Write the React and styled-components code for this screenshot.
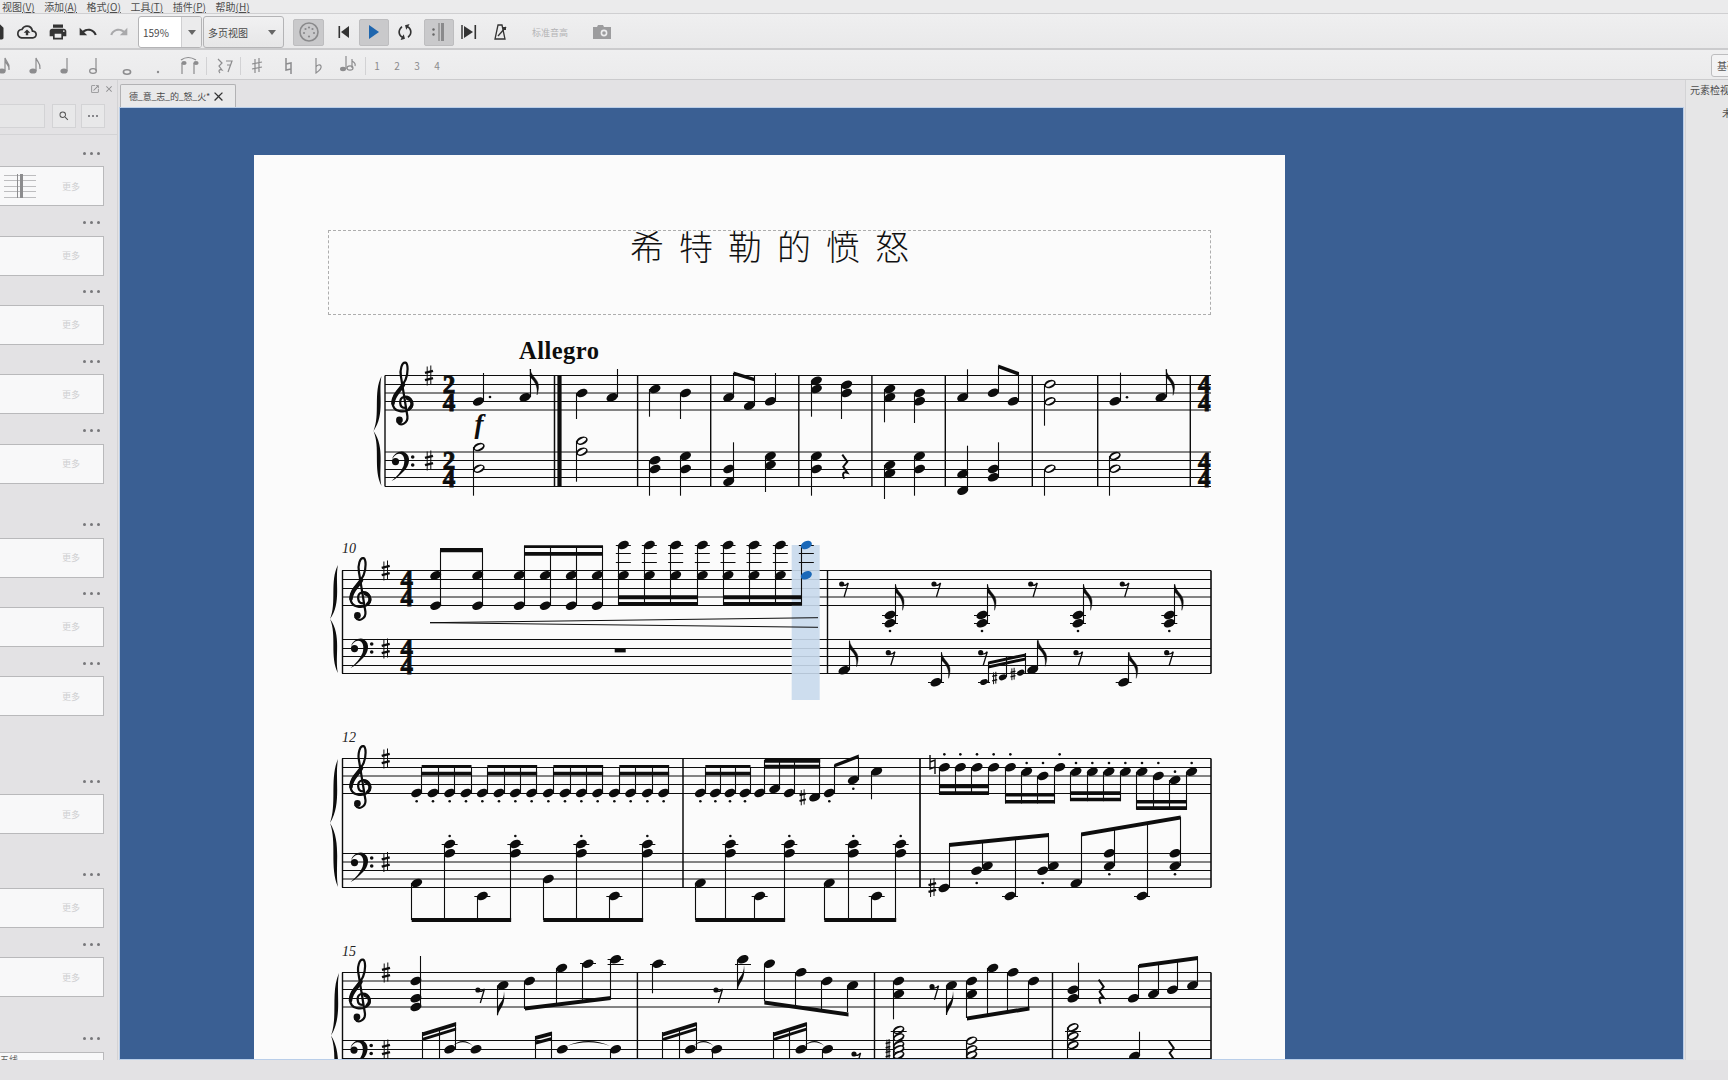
import React from "react";
import styled, { createGlobalStyle } from "styled-components";
import {
  MdPrint,
  MdUndo,
  MdRedo,
  MdOutlineCloudUpload,
  MdSync,
  MdSave,
  MdSearch,
  MdClose,
  MdOutlineOpenInNew,
} from "react-icons/md";

const CJK = `"Noto Sans CJK SC", "Noto Sans", sans-serif`;
const SERIF = `"Liberation Serif", serif`;
const INK = "#0d0d0d";
const PAPER = "#fbfbfb";
const GREY = "#8c8c8e";

const GlobalStyle = createGlobalStyle`
  html, body {
    margin: 0;
    padding: 0;
    background: #e3e2e4;
    overflow: hidden;
  }
  * { box-sizing: border-box; }
`;

const Shell = styled.div`
  width: 1728px;
  height: 1080px;
  display: flex;
  flex-direction: column;
  overflow: hidden;
  background: #e3e2e4;
  font-family: ${CJK};
`;

const MenuBar = styled.div`
  height: 14px;
  flex: none;
  display: flex;
  align-items: center;
  gap: 9.6px;
  padding-left: 2px;
  background: #ebebec;
  border-bottom: 1px solid #cfcfd1;
`;
const MenuItem = styled.span`
  font-size: 10px;
  line-height: 13px;
  color: #4d4d4d;
  white-space: nowrap;
`;

const ToolBar = styled.div`
  height: 36px;
  flex: none;
  display: flex;
  align-items: center;
  padding-top: 2px;
  margin-left: -20px;
  width: 1748px;
  background: linear-gradient(#efeff0, #e9e9ea);
  border-bottom: 2px solid #cbcbcd;
`;
const IconBtn = styled.div`
  flex: none;
  width: ${(p) => p.$w || 30}px;
  height: 27px;
  margin-left: ${(p) => p.$ml || 0}px;
  display: flex;
  align-items: center;
  justify-content: center;
  color: ${(p) => p.$color || "#333"};
  font-size: 20px;
  border-radius: 2px;
  background: ${(p) => (p.$on ? "#c9c9cb" : "transparent")};
  border: 1px solid ${(p) => (p.$on ? "#bdbdbf" : "transparent")};
  & > svg.turned {
    transform: rotate(30deg);
  }
`;
const ComboBox = styled.div`
  flex: none;
  width: ${(p) => p.$w}px;
  height: 32px;
  margin-left: ${(p) => p.$ml}px;
  display: flex;
  align-items: center;
  border: 1px solid #b4b4b6;
  border-radius: 3px;
  background: ${(p) => (p.$edit ? "#fff" : "linear-gradient(#f1f1f2, #e6e6e7)")};
  overflow: hidden;
`;
const ComboText = styled.span`
  flex: 1;
  padding-left: 4px;
  font-size: 10px;
  color: #4a4a4a;
  white-space: nowrap;
`;
const ComboArrow = styled.span`
  flex: none;
  width: ${(p) => p.$w}px;
  height: 100%;
  display: flex;
  align-items: center;
  justify-content: center;
  background: ${(p) => (p.$edit ? "#ebebec" : "transparent")};
  border-left: ${(p) => (p.$edit ? "1px solid #cfcfd1" : "none")};
  &::after {
    content: "";
    border-left: 4px solid transparent;
    border-right: 4px solid transparent;
    border-top: 5px solid #666;
  }
`;
const Handle = styled.span`
  flex: none;
  width: 4px;
  height: 22px;
  margin-left: ${(p) => p.$ml}px;
  background-image: radial-gradient(#c2c2c4 35%, transparent 40%);
  background-size: 2px 2px;
`;
const ConcertPitch = styled.span`
  flex: none;
  width: 38px;
  margin-left: ${(p) => p.$ml}px;
  font-size: 9px;
  color: #b3b3b5;
  white-space: nowrap;
`;

const NoteBar = styled.div`
  height: 30px;
  flex: none;
  display: flex;
  align-items: center;
  padding-top: 2px;
  margin-left: -9px;
  width: 1737px;
  background: linear-gradient(#efeff0, #ebebec);
  border-bottom: 1px solid #cbcbcd;
  overflow: hidden;
`;
const NoteBtn = styled.div`
  flex: none;
  width: ${(p) => p.$w}px;
  height: 26px;
  display: flex;
  align-items: center;
  justify-content: center;
  font-size: 10px;
  color: #8a8a8c;
`;
const ThinRule = styled.span`
  flex: none;
  width: 1px;
  height: 18px;
  margin: 0 1px;
  background: #d2d2d4;
`;
const PresetBtn = styled.div`
  flex: none;
  width: 32px;
  height: 23px;
  margin-left: auto;
  margin-right: -15px;
  padding-left: 5px;
  font-size: 10px;
  line-height: 21px;
  color: #555;
  border: 1px solid #bdbdbf;
  border-radius: 3px;
  background: #f3f3f4;
  white-space: nowrap;
`;

const Main = styled.div`
  flex: 1;
  min-height: 0;
  display: flex;
`;

const LeftDock = styled.aside`
  flex: none;
  width: 118px;
  height: 100%;
  overflow: hidden;
  background: #e3e2e4;
  border-right: 1px solid #d3d3d5;
`;
const DockHead = styled.div`
  height: 24px;
  display: flex;
  justify-content: flex-end;
  align-items: center;
  gap: 4px;
  padding: 0 3px 6px 0;
  color: #8a8a8c;
  font-size: 10px;
`;
const SearchRow = styled.div`
  height: 31px;
  display: flex;
  align-items: flex-start;
  border-bottom: 1px solid #d3d3d5;
`;
const SearchInput = styled.div`
  width: 45px;
  height: 24px;
  border: 1px solid #d3d3d5;
  border-left: none;
  background: #e6e6e7;
`;
const SquareBtn = styled.div`
  width: 24px;
  height: 24px;
  margin-left: ${(p) => p.$ml}px;
  display: flex;
  align-items: center;
  justify-content: center;
  font-size: 12px;
  color: #555;
  border: 1px solid #d3d3d5;
  background: #e8e8e9;
`;
const EllipsisDots = styled.span`
  display: flex;
  gap: 2px;
  & > i {
    width: 2px;
    height: 2px;
    border-radius: 50%;
    background: #66666a;
  }
`;
const PaletteList = styled.div`
  padding-top: 12px;
`;
const PaletteSection = styled.section`
  height: ${(p) => p.$h}px;
`;
const Dots = styled.div`
  height: 12px;
  display: flex;
  align-items: center;
  justify-content: flex-end;
  gap: 4px;
  padding-right: 17px;
  & > i {
    width: 3px;
    height: 3px;
    border-radius: 50%;
    background: #77777a;
  }
`;
const PaletteBox = styled.div`
  width: 104px;
  height: 40px;
  margin-top: 7px;
  display: flex;
  align-items: center;
  padding-right: 23px;
  background: #f8f8f9;
  border: 1px solid #b9b9bb;
  border-left: none;
`;
const MoreLabel = styled.span`
  margin-left: auto;
  font-size: 9px;
  color: #cfcfd1;
`;
const PaletteLabel = styled.span`
  align-self: flex-start;
  margin-top: 1px;
  font-size: 9px;
  line-height: 12px;
  color: #666;
`;

const Center = styled.div`
  flex: none;
  width: 1565px;
  margin-left: 1px;
  display: flex;
  flex-direction: column;
`;
const TabBar = styled.div`
  height: 27px;
  flex: none;
  display: flex;
  align-items: flex-end;
  padding-left: 1px;
`;
const Tab = styled.div`
  width: 116px;
  height: 23px;
  display: flex;
  align-items: center;
  padding-left: 8px;
  background: #e9e9ea;
  border: 1px solid #b2b2b4;
  border-bottom: none;
  border-radius: 2px 2px 0 0;
  font-size: 9px;
  letter-spacing: -0.2px;
  color: #4a4a4a;
  white-space: nowrap;
`;
const TabClose = styled.span`
  display: flex;
  margin-left: 1px;
  font-size: 15px;
  color: #333;
`;
const Canvas = styled.div`
  flex: 1;
  min-height: 0;
  overflow: hidden;
  padding: 47px 0 0 134px;
  background: #3a5f93;
  border: 1px solid #b9cee9;
`;
const Page = styled.div`
  width: 1031px;
  height: 1000px;
  padding-top: 75px;
  background: ${PAPER};
`;
const TitleFrame = styled.div`
  width: 883px;
  height: 85px;
  margin-left: 74px;
  border: 1px dashed #adadad;
  text-align: center;
`;
const Title = styled.div`
  font-family: ${CJK};
  font-weight: 300;
  font-size: 34px;
  line-height: 30px;
  letter-spacing: 15px;
  padding-left: 15px;
  color: #111;
`;
const ScoreSvg = styled.svg`
  display: block;
  margin-top: 5px;
`;

const RightDock = styled.aside`
  flex: 1;
  min-width: 0;
  margin-left: 1px;
  overflow: hidden;
  border-left: 1px solid #d3d3d5;
  background: #e6e6e7;
`;
const InspectorTitle = styled.div`
  padding: 3px 0 0 4px;
  font-size: 10px;
  line-height: 14px;
  color: #4d4d4d;
  white-space: nowrap;
`;
const InspectorEmpty = styled.div`
  padding: 9px 0 0 36px;
  font-size: 10px;
  line-height: 14px;
  color: #555;
  white-space: nowrap;
`;
const StatusBar = styled.div`
  height: 20px;
  flex: none;
  background: #e3e2e4;
`;

/* ---- score drawing, coordinates are taken from the screen ---- */
let uid = 0;
const k = () => uid++;
const crisp = (v) => Math.floor(v) + 0.5;

const head = (x, y, fill = INK) => (
  <ellipse key={k()} cx={x} cy={y} rx={5.8} ry={3.9} fill={fill} transform={`rotate(-24 ${x} ${y})`} />
);
const hollow = (x, y) => (
  <g key={k()}>
    <ellipse cx={x} cy={y} rx={5.9} ry={3.9} fill={INK} transform={`rotate(-20 ${x} ${y})`} />
    <ellipse cx={x} cy={y} rx={4.5} ry={1.9} fill={PAPER} transform={`rotate(-28 ${x} ${y})`} />
  </g>
);
const small = (x, y) => (
  <ellipse key={k()} cx={x} cy={y} rx={4} ry={2.7} fill={INK} transform={`rotate(-24 ${x} ${y})`} />
);
const stem = (x, y1, y2, w = 1.1) => (
  <line key={k()} x1={crisp(x)} x2={crisp(x)} y1={y1} y2={y2} stroke={INK} strokeWidth={w} />
);
const beam = (x1, y1, x2, y2, t = 4) => (
  <polygon key={k()} points={`${x1},${y1} ${x2},${y2} ${x2},${y2 + t} ${x1},${y1 + t}`} fill={INK} />
);
const dot = (x, y, r = 1.3) => <circle key={k()} cx={x} cy={y} r={r} fill={INK} />;
const ledger = (x, y, w = 8) => (
  <line key={k()} x1={x - w} x2={x + w} y1={crisp(y)} y2={crisp(y)} stroke={INK} strokeWidth={1} />
);
const flag = (x, y) => (
  <path
    key={k()}
    d={`M${x} ${y} C${x + 1} ${y + 8} ${x + 9.5} ${y + 10} ${x + 8.5} ${y + 19} C${x + 8.3} ${y + 21} ${x + 8} ${y + 23} ${x + 7} ${y + 26} C${x + 7.6} ${y + 20} ${x + 7} ${y + 14} ${x} ${y + 8} Z`}
    fill={INK}
    stroke={INK}
    strokeWidth={0.4}
  />
);
const downFlag = (x, y) => (
  <path
    key={k()}
    d={`M${x} ${y} C${x + 1} ${y - 7} ${x + 8} ${y - 9} ${x + 6} ${y - 24} C${x + 6} ${y - 14} ${x + 1} ${y - 12} ${x} ${y - 8} Z`}
    fill={INK}
  />
);
const rest8 = (x, y) => (
  <g key={k()}>
    <circle cx={x} cy={y} r={2.6} fill={INK} />
    <path d={`M${x} ${y + 1} Q${x + 3.5} ${y + 2.5} ${x + 6.6} ${y - 1} L${x + 2.4} ${y + 13}`} fill="none" stroke={INK} strokeWidth={1.3} />
  </g>
);
const rest4 = (x, y) => (
  <path
    key={k()}
    d={`M${x - 2} ${y - 12} L${x + 3} ${y - 5} L${x - 1} ${y} L${x + 3} ${y + 6} C${x} ${y + 5} ${x - 3} ${y + 6} ${x} ${y + 12}`}
    fill="none"
    stroke={INK}
    strokeWidth={2}
  />
);
const sharp = (x, y, s = 1) => (
  <g key={k()} stroke={INK}>
    <line x1={x - 1.8 * s} x2={x - 1.8 * s} y1={y - 9 * s} y2={y + 10 * s} strokeWidth={1} />
    <line x1={x + 1.8 * s} x2={x + 1.8 * s} y1={y - 10 * s} y2={y + 9 * s} strokeWidth={1} />
    <line x1={x - 4 * s} x2={x + 4 * s} y1={y - 2.6 * s} y2={y - 4.6 * s} strokeWidth={2.4 * s} />
    <line x1={x - 4 * s} x2={x + 4 * s} y1={y + 4.6 * s} y2={y + 2.6 * s} strokeWidth={2.4 * s} />
  </g>
);
const natural = (x, y) => (
  <path key={k()} d={`M${x - 2.5} ${y - 9} V${y + 5} L${x + 2.5} ${y + 3} M${x - 2.5} ${y - 2} L${x + 2.5} ${y - 4} V${y + 10}`} fill="none" stroke={INK} strokeWidth={1.4} />
);
const tie = (x1, x2, y) => (
  <path key={k()} d={`M${x1} ${y} Q${(x1 + x2) / 2} ${y - 10} ${x2} ${y} Q${(x1 + x2) / 2} ${y - 7.5} ${x1} ${y} Z`} fill={INK} />
);
const down = (x, ys, end) => [...ys.map((y) => head(x, y)), stem(x - 5.3, Math.min(...ys), end)];
const up = (x, ys, end) => [...ys.map((y) => head(x, y)), stem(x + 5, Math.max(...ys), end)];
const downHalf = (x, ys, end) => [stem(x - 5.3, Math.min(...ys), end), ...ys.map((y) => hollow(x, y))];

const staff = (x1, x2, ys) =>
  ys.map((y) => <line key={k()} x1={x1} x2={x2} y1={y} y2={y} stroke={INK} strokeWidth={1} />);
const bar = (x, y1, y2, w = 1.4) => (
  <line key={k()} x1={x} x2={x} y1={y1} y2={y2} stroke={INK} strokeWidth={w} />
);
const brace = (x, y1, y2, w = 8) => {
  const h = y2 - y1;
  const at = (f) => y1 + h * f;
  return (
    <path
      key={k()}
      d={`M${x + w} ${y1} C${x - 0.5} ${at(0.15)} ${x + w - 1} ${at(0.35)} ${x} ${at(0.5)} C${x + w - 1} ${at(0.65)} ${x - 0.5} ${at(0.85)} ${x + w} ${y2} C${x + 4.5} ${at(0.85)} ${x + w + 4} ${at(0.65)} ${x} ${at(0.5)} C${x + w + 4} ${at(0.35)} ${x + 4.5} ${at(0.15)} ${x + w} ${y1} Z`}
      fill={INK}
    />
  );
};
const treble = (x, y) => (
  <g key={k()} transform={`translate(${x} ${y}) scale(1.05)`} fill="none" stroke={INK} strokeLinecap="round">
    <path strokeWidth={2.1} d="M1.5 6 C-3.5 6 -4.5 -3 1 -4.5 C8 -5.5 11.5 3 6 7.5 C1 11 -9.5 10 -10 1.5 C-10.5 -8 -1 -13 2.5 -21 C5 -27 5 -36 2.4 -37 C-1 -38 -3.2 -30 -2 -24 L4.2 14 C5 21 -2.5 24 -5.2 19.5" />
    <path strokeWidth={3.4} d="M-9.5 2 C-9.5 -6 -2.5 -10 0.5 -16" />
    <path strokeWidth={3} d="M4 -3 C9 -2 10 4 6 7" />
    <circle cx={-3.4} cy={17.6} r={3.2} fill={INK} stroke="none" />
  </g>
);
const bass = (x, y) => (
  <g key={k()} transform={`translate(${x} ${y})`} fill={INK}>
    <path d="M-10 -1 C-9 -8 -1 -11 3 -8.6 C9.5 -5 7.5 5 2 10 C-2 14 -6 18 -10.5 20 C-5 15 -1 11 1.5 5 C3.5 -1 2 -7.2 -3 -7.2 C-6 -7.2 -9 -4 -10 -1 Z" />
    <circle cx={-6.5} cy={0.6} r={3.6} />
    <circle cx={10.7} cy={-4} r={1.8} />
    <circle cx={10.7} cy={4} r={1.8} />
  </g>
);
const digits = (x, a, b, ya, yb) => [
  <text key={k()} x={x} y={ya + 8.6} textAnchor="middle" fontFamily={SERIF} fontWeight="bold" fontSize={25} stroke={INK} strokeWidth={0.9} fill={INK}>{a}</text>,
  <text key={k()} x={x} y={yb + 8.6} textAnchor="middle" fontFamily={SERIF} fontWeight="bold" fontSize={25} stroke={INK} strokeWidth={0.9} fill={INK}>{b}</text>,
];
const number = (x, y, t) => (
  <text key={k()} x={x} y={y} fontFamily={SERIF} fontStyle="italic" fontSize={14} fill="#222">{t}</text>
);

const systemOne = () => [
  staff(385, 1211, [375.5, 384.5, 393, 401.5, 410]),
  staff(385, 1211, [452, 460.5, 469.5, 477.5, 486.5]),
  brace(373.5, 376, 486),
  [385, 637.6, 710.7, 798.8, 871.9, 945.3, 1032.3, 1097.7, 1190.3].map((x) => bar(x, 375.5, 486.5)),
  bar(554.5, 375.5, 486.5, 1.5),
  bar(559.5, 375.5, 486.5, 4.2),
  treble(403, 401.5),
  bass(402, 461),
  sharp(429, 375.5),
  sharp(429, 460.5),
  digits(449, 2, 4, 384.5, 402),
  digits(449, 2, 4, 460.5, 478),
  <text key={k()} x={519} y={359} fontFamily={SERIF} fontWeight="bold" fontSize={24.5} textLength={80} lengthAdjust="spacing" fill={INK}>Allegro</text>,
  <text key={k()} x={479} y={433} textAnchor="middle" fontFamily={SERIF} fontWeight="bold" fontStyle="italic" fontSize={27} fill={INK}>f</text>,
  // opening measure
  up(478.4, [401.5], 373),
  dot(490, 397),
  up(525, [397.3], 369),
  flag(530, 369),
  downHalf(479, [447, 468.7], 495.7),
  // 2
  down(582, [393], 419),
  up(612, [397.3], 369),
  downHalf(582, [440.7, 451.7], 481.7),
  // 3
  down(655, [389], 416.7),
  down(685.5, [393], 419),
  down(655, [460.3, 469], 495.7),
  down(685.5, [456, 469], 495.7),
  // 4
  up(728.7, [397.3], 373),
  up(749.4, [405.7], 376),
  beam(733.7, 371.5, 754.9, 378, 3.6),
  up(770.4, [401.3], 373),
  up(728.7, [469, 481.7], 442.3),
  down(770.4, [456, 465], 492),
  // 5
  down(816.4, [380.7, 389], 416.7),
  down(846.6, [384.7, 393], 419),
  down(816.4, [456, 469], 495.7),
  rest4(844.3, 466.7),
  // 6
  down(889.8, [389, 397.3], 422.3),
  down(919.5, [393, 401.3], 423),
  down(889.8, [465, 473.3], 499),
  down(919.5, [456, 469], 495.7),
  // 7
  up(962.7, [397.3], 369.3),
  up(993.3, [392.7], 366),
  up(1013.3, [401.3], 372),
  beam(998.3, 364.5, 1018.8, 372, 3.8),
  up(962.7, [474, 490.7], 445.7),
  up(993.3, [469, 477.3], 442.3),
  // 8
  downHalf(1050, [384, 401.3], 425.7),
  downHalf(1050, [468.7], 495.7),
  // 9
  up(1115, [401.3], 372.7),
  dot(1127, 397.3),
  up(1161, [397.3], 369.3),
  flag(1166, 369.3),
  downHalf(1115, [456, 468.7], 495.7),
  digits(1204.3, 4, 4, 384.5, 402),
  digits(1204.3, 4, 4, 461, 478.5),
];

const highNotes = [910, 988, 1067, 1147, 1224, 1302, 1381, 1459].map((v) => v / 3 + 320);

const systemTwo = () => [
  staff(342, 1211, [570.5, 579.5, 588.5, 597, 605.5]),
  staff(342, 1211, [639.5, 648.5, 656.5, 665.5, 673.5]),
  // the selected chord's column lies over the staff lines
  <rect key={k()} x={791.7} y={545} width={28} height={155} fill="#c8d9ec" opacity={0.9} />,
  brace(330, 565, 673),
  bar(342.5, 570.5, 673.5),
  bar(827.5, 570.5, 673.5),
  bar(1211, 570.5, 673.5, 1.6),
  number(342, 553, "10"),
  treble(361, 597),
  bass(361, 648),
  sharp(385.7, 570.5),
  sharp(385.7, 648.5),
  digits(406.7, 4, 4, 579.5, 597),
  digits(406.7, 4, 4, 648.5, 665.5),
  [435.7, 477.7].map((x) => up(x, [605.7, 575.3], 550)),
  beam(440, 548, 483, 548, 4.2),
  [519.3, 545.3, 571.3, 597.3].map((x) => up(x, [605.7, 575.3], 546)),
  beam(524, 545.3, 603, 545.3, 2.6),
  beam(524, 552, 603, 552, 3.7),
  highNotes.map((x, i) => {
    const fill = i === 7 ? "#1a68b8" : INK;
    return [
      ledger(x, 545, 7.5),
      ledger(x, 553.7, 7.5),
      ledger(x, 562.3, 7.5),
      stem(x - 5, 545, 605),
      head(x, 545, fill),
      head(x, 575.3, fill),
    ];
  }),
  beam(618.7, 595.3, 697, 595.3, 4),
  beam(618.7, 602, 697, 602, 3.8),
  beam(723, 595.3, 802, 595.3, 4),
  beam(723, 602, 802, 602, 3.8),
  <path key={k()} d="M430 622.7 L818 617.7 M430 622.7 L818 627.3" fill="none" stroke={INK} strokeWidth={1} />,
  <rect key={k()} x={614.7} y={648} width={11} height={4.4} fill={INK} />,
  [841.7, 934, 1030.7, 1122.3].map((x) => rest8(x, 584)),
  [890, 982, 1078, 1169.3].map((x) => [
    ledger(x, 615),
    ledger(x, 623.3),
    up(x, [615, 623.3], 584.3),
    flag(x + 5.5, 584.3),
    dot(x, 631),
  ]),
  up(844, [670.3], 640.7),
  flag(849.5, 640.7),
  rest8(888.3, 652.7),
  ledger(936, 682.3),
  up(936, [682.3], 652.3),
  flag(941.5, 652.3),
  rest8(980.7, 652.7),
  ledger(984, 682, 6),
  small(984, 682),
  small(1002.7, 677.3),
  small(1020.7, 672.7),
  stem(988.3, 662, 682),
  stem(1006.7, 657, 677),
  stem(1025, 653, 673),
  beam(988.3, 661.5, 1025.5, 653.5, 3),
  beam(988.3, 665.5, 1025.5, 657.5, 3),
  sharp(994.7, 678, 0.62),
  sharp(1013, 674, 0.62),
  up(1032.7, [669.7], 640.3),
  flag(1038.2, 640.3),
  rest8(1076, 652.7),
  ledger(1123.7, 682.3),
  up(1123.7, [682.3], 652.3),
  flag(1129.2, 652.3),
  rest8(1166.7, 652.7),
];

const z6 = (v) => v / 3 + 320;
const z7 = (v) => v / 3 + 780;

const systemThree = () => [
  staff(342, 1211, [758.5, 767.5, 776, 784.5, 793.5]),
  staff(342, 1211, [853.5, 862, 870.5, 879, 887.5]),
  brace(330, 759, 887),
  bar(342.5, 758.5, 887.5),
  bar(683, 758.5, 887.5, 1.5),
  bar(920, 758.5, 887.5, 1.7),
  bar(1211, 758.5, 887.5, 1.6),
  number(342, 741.5, "12"),
  treble(361, 785),
  bass(361, 862),
  sharp(385.7, 758.5),
  sharp(385.7, 862),
  // running sixteenths, dotted underneath
  [[290, 339, 389, 438], [487, 537, 586, 635], [685, 735, 784, 833], [883, 932, 982, 1031], [1141, 1186, 1230, 1275]].map((group) => {
    const xs = group.map(z6);
    return [
      xs.map((x) => [up(x, [793], 767), dot(x, 801.3)]),
      beam(xs[0] + 5, 765, xs[3] + 5.5, 765, 2.8),
      beam(xs[0] + 5, 771.7, xs[3] + 5.5, 771.7, 3.6),
    ];
  }),
  up(759.7, [793], 760),
  up(774.7, [789], 760),
  up(789.3, [793], 760),
  sharp(802.7, 797.3, 0.8),
  up(814.7, [797.3], 760),
  beam(764.7, 758.7, 820.2, 758.7, 4),
  beam(764.7, 764.7, 820.2, 764.7, 4),
  up(829.3, [793], 765),
  dot(829.3, 801.3),
  up(853.3, [780], 757),
  dot(853.3, 788.7),
  beam(834.3, 764, 858.8, 754.5, 3.6),
  down(876.7, [771.3], 799.3),
  // measure 14, upper staff
  natural(932.5, 764),
  [[493, 541, 591, 641], [691, 740, 789, 839], [888, 937, 987, 1036], [1086, 1135, 1185, 1235]].map((group, g) => {
    const ys = [[767.3, 767.3, 767.3, 767.3], [767.3, 771.7, 776, 767.3], [771.7, 771.7, 771.7, 771.7], [771.7, 776, 780, 771.7]][g];
    const dots = [[103, 103, 103, 103], [103, 129, 129, 103], [129, 129, 129, 129], [129, 129, 155, 129]][g];
    const beams = [[784.7, 791.3], [793, 800], [791.3, 797.7], [800, 806.3]][g];
    const xs = group.map(z7);
    return [
      xs.map((x, i) => [down(x, [ys[i]], beams[1] + 3.5), dot(x, dots[i] / 3 + 720)]),
      beam(xs[0] - 5.3, beams[0], xs[3] - 4.8, beams[0], 3.6),
      beam(xs[0] - 5.3, beams[1], xs[3] - 4.8, beams[1], 3.6),
    ];
  }),
  // left hand of 12 and 13
  [[275, 374, 472, 571], [670, 769, 868, 967], [1126, 1216, 1304, 1393]].map((group, g) => {
    const lows = [883, 879, 883][g];
    const xs = group.map(z6);
    return [
      stem(xs[0], lows, 920),
      stem(xs[1], 844, 920),
      stem(xs[2], 896, 920),
      stem(xs[3], 844, 920),
      head(xs[0] + 5, lows),
      ledger(xs[1] + 5, 844),
      head(xs[1] + 5, 844),
      head(xs[1] + 5, 853.3),
      dot(xs[1] + 5, 836),
      ledger(xs[2] + 5, 896),
      head(xs[2] + 5, 896),
      ledger(xs[3] + 5, 844),
      head(xs[3] + 5, 844),
      head(xs[3] + 5, 853.3),
      dot(xs[3] + 5, 836),
      beam(xs[0], 918, xs[3] + 0.8, 918, 4),
    ];
  }),
  stem(z7(133), 883, 920),
  head(829.3, 883),
  stem(z7(205), 844, 920),
  ledger(853.3, 844),
  head(853.3, 844),
  head(853.3, 853.3),
  dot(853.3, 836),
  stem(z7(275), 896, 920),
  ledger(876.7, 896),
  head(876.7, 896),
  stem(z7(347), 844, 920),
  ledger(900.7, 844),
  head(900.7, 844),
  head(900.7, 853.3),
  dot(900.7, 836),
  beam(824.3, 918, 896.2, 918, 4),
  // left hand of 14
  sharp(932.3, 887.5, 0.95),
  up(944, [888], 844),
  head(976.7, 870.7),
  head(987.3, 866),
  stem(982.3, 866, 840),
  dot(976.7, 883),
  ledger(1010, 896),
  up(1010, [896], 840),
  head(1042.7, 870.7),
  head(1053.3, 866),
  stem(1048.3, 866, 835),
  dot(1042.7, 883),
  beam(949, 843, 1049, 833, 4),
  up(1076, [883.3], 834),
  up(1109.3, [853.3, 866], 828),
  dot(1109.3, 874.3),
  ledger(1142, 896),
  up(1142, [896], 822),
  up(1175, [853.3, 866], 817),
  dot(1175, 874.3),
  beam(1081, 832.5, 1180.6, 815.5, 4),
];

const systemFour = () => [
  staff(342, 1211, [972.5, 981, 989.5, 998.5, 1007]),
  staff(342, 1211, [1040.5, 1049.5, 1058.5]),
  brace(331, 973, 1098),
  bar(342.5, 972.5, 1060),
  bar(637.4, 972.5, 1060),
  bar(874.5, 972.5, 1060),
  bar(1052.5, 972.5, 1060),
  bar(1211, 972.5, 1060, 1.6),
  number(342, 955.5, "15"),
  treble(360.5, 998.5),
  bass(360.5, 1049.5),
  sharp(386, 972.5),
  sharp(386, 1049.5),
  // 15
  up(415.9, [981, 998.3, 1007], 956),
  rest8(477.9, 990),
  down(503, [985.3], 1015.3),
  downFlag(498, 1015.3),
  down(529.5, [981], 1009),
  down(561.7, [968], 1004),
  ledger(588, 963.7),
  down(588, [963.7], 1000),
  ledger(615.6, 959.3),
  ledger(615.6, 964),
  down(615.6, [959.3], 998),
  beam(525, 1006.5, 610.9, 996, 4),
  // 16
  down(658, [963.7], 993.3),
  ledger(658, 964),
  rest8(716, 990),
  down(743, [959.3], 989),
  downFlag(738, 989),
  ledger(743, 964),
  down(769.5, [963.7], 1001),
  down(801, [972.3], 1006),
  down(827, [981], 1009),
  down(852.7, [985.3], 1012),
  beam(764.3, 1000.5, 848.5, 1012.5, 4),
  // 17
  down(898.7, [981, 994], 1019.3),
  rest8(932, 986.7),
  down(951.5, [985.3], 1015),
  downFlag(947, 1015),
  down(971.6, [981, 994], 1018),
  down(992.8, [968], 1014),
  down(1013, [972.3], 1011),
  down(1033.6, [981], 1008),
  beam(967, 1016.5, 1029.5, 1006.5, 4),
  // 18
  up(1073, [989.7, 998.3], 962.7),
  rest4(1100.7, 991.7),
  up(1133.4, [998.3], 965),
  up(1153.5, [994], 962),
  up(1172.5, [989.7], 960),
  up(1192.6, [985.3], 957),
  beam(1139, 964, 1198, 956, 4),
  // left hand
  [[422, 439, 455.5], [662.7, 679.4, 696], [773.5, 789.6, 806.2]].map(([a, b, c]) => [
    stem(a, 1032, 1060),
    stem(b, 1028, 1060),
    stem(c, 1023, 1049),
    beam(a, 1032.5, c + 0.6, 1022, 4),
    beam(a, 1038, c + 0.6, 1027.5, 3),
  ]),
  [stem(535.3, 1036, 1060), stem(551.3, 1032, 1060)],
  beam(535.3, 1036, 551.9, 1031.5, 4),
  beam(535.3, 1041.5, 551.9, 1037, 3.2),
  [[449.7, 476], [690.3, 716.7], [801, 827.5]].map(([a, b]) => [head(a, 1049.3), head(b, 1049.3), tie(a + 3, b - 3, 1046)]),
  head(562.3, 1049.3),
  head(615.6, 1049.3),
  tie(567, 610, 1046),
  stem(610.5, 1049.3, 1060),
  stem(712, 1049.3, 1060),
  stem(822.3, 1049.3, 1060),
  rest8(854, 1054),
  // 17, 18 half-note chords
  stem(893.5, 1030, 1060),
  [1030, 1037.3, 1045, 1049.3, 1055].map((y) => hollow(898.7, y)),
  ledger(898.7, 1031.7),
  sharp(888, 1045, 0.6),
  sharp(888, 1054, 0.6),
  stem(966.5, 1040.7, 1060),
  [1040.7, 1049.3, 1055].map((y) => hollow(971.6, y)),
  stem(1067.5, 1027.3, 1060),
  ledger(1073, 1031.7),
  [1027.3, 1036, 1045].map((y) => hollow(1073, y)),
  up(1134.6, [1056], 1031.7),
  rest4(1170.7, 1053),
];

const SCORE = [systemOne(), systemTwo(), systemThree(), systemFour()];

/* ---- toolbar drawings ---- */
const Glyph = styled.svg`
  display: block;
  fill: none;
  stroke: none;
`;

const MidiIcon = () => (
  <Glyph width="22" height="22" viewBox="0 0 22 22">
    <circle cx="11" cy="11" r="9" stroke="#8a8a8c" strokeWidth="1.6" />
    {[[6, 12], [7.5, 8], [11, 6.5], [14.5, 8], [16, 12], [11, 15.5]].map(([x, y]) => (
      <circle key={`${x}-${y}`} cx={x} cy={y} r="1.1" fill="#8a8a8c" />
    ))}
  </Glyph>
);
const StartIcon = () => (
  <Glyph width="12" height="12" viewBox="0 0 12 12">
    <rect x="0.5" width="1.6" height="12" fill="#333" />
    <path d="M11 0 V12 L3 6 Z" fill="#333" />
  </Glyph>
);
const PlayIcon = () => (
  <Glyph width="12" height="14" viewBox="0 0 12 14">
    <path d="M1 0 L11 7 L1 14 Z" fill="#1f66ae" />
  </Glyph>
);
const RepeatIcon = () => (
  <Glyph width="14" height="18" viewBox="0 0 14 18">
    <circle cx="1.5" cy="6.5" r="1.2" fill="#666" />
    <circle cx="1.5" cy="11.5" r="1.2" fill="#666" />
    <rect x="6.5" width="1" height="18" fill="#777" />
    <rect x="9" width="3" height="18" fill="#8a8a8c" />
  </Glyph>
);
const EndIcon = () => (
  <Glyph width="16" height="14" viewBox="0 0 16 14">
    <rect width="2" height="14" fill="#666" />
    <path d="M3 1 L12 7 L3 13 Z" fill="#333" />
    <rect x="13.5" width="1.6" height="14" fill="#333" />
  </Glyph>
);
const MetronomeIcon = () => (
  <Glyph width="14" height="16" viewBox="0 0 14 16">
    <path d="M4 1 H8 L11 15 H1 Z" stroke="#333" strokeWidth="1.3" />
    <path d="M4 12 L12 3" stroke="#333" strokeWidth="1.3" />
    <rect x="9" y="3" width="3" height="3" fill="#333" />
  </Glyph>
);
const CameraIcon = () => (
  <Glyph width="18" height="14" viewBox="0 0 18 14">
    <path d="M0 2 H4 L5 0 H10 L11 2 H18 V14 H0 Z" fill="#9c9c9e" />
    <circle cx="11" cy="8" r="3.4" fill="#ededee" />
    <circle cx="11" cy="8" r="1.8" fill="#9c9c9e" />
  </Glyph>
);

const noteStroke = { stroke: GREY, strokeWidth: 1.2 };
const NoteGlyph = ({ kind }) => {
  const shapes = {
    sixteenth: (
      <>
        <ellipse cx="7" cy="17" rx="3.6" ry="2.6" fill={GREY} />
        <path d="M10 17 V4 C11 8 15 9 14 14 M10 7 C11 10 15 11 14 16" {...noteStroke} />
      </>
    ),
    eighth: (
      <>
        <ellipse cx="7" cy="17" rx="3.6" ry="2.6" fill={GREY} />
        <path d="M10 17 V4 C11 8 15 9 14 15" {...noteStroke} />
      </>
    ),
    quarter: (
      <>
        <ellipse cx="9" cy="17" rx="3.6" ry="2.6" fill={GREY} />
        <path d="M12 17 V4" {...noteStroke} />
      </>
    ),
    half: (
      <>
        <ellipse cx="9" cy="17" rx="3.4" ry="2.4" {...noteStroke} />
        <path d="M12 17 V4" {...noteStroke} />
      </>
    ),
    whole: <ellipse cx="11" cy="18" rx="3.6" ry="2.2" {...noteStroke} strokeWidth="1.6" />,
    dot: <circle cx="11" cy="18" r="1.2" fill={GREY} />,
    tie: (
      <>
        <path d="M3 6 Q10 1 18 6" {...noteStroke} />
        <path d="M4 9 V20 M16 9 V20" {...noteStroke} />
        <ellipse cx="6" cy="9" rx="2.6" ry="2" fill={GREY} />
        <ellipse cx="18" cy="9" rx="2.6" ry="2" fill={GREY} />
      </>
    ),
    rests: (
      <>
        <path d="M5 5 L9 9 L6 12 L9 16 C6 15 5 17 7 19" {...noteStroke} />
        <path d="M13 7 H19 L15 18 M14 11 H18" {...noteStroke} />
      </>
    ),
    sharp: <path d="M9 5 V19 M13 4 V18 M6 10 L16 8 M6 15 L16 13" {...noteStroke} />,
    natural: <path d="M9 4 V16 L14 15 M9 10 L14 9 V20" {...noteStroke} strokeWidth="1.5" />,
    flat: <path d="M9 4 V19 C12 17 15 15 14 12 C13 10 10 11 9 13" {...noteStroke} />,
    flip: (
      <>
        <ellipse cx="6" cy="15" rx="3" ry="2.2" fill={GREY} />
        <path d="M9 15 V2 M15 5 V14 M15 7 C17 8 19 9 18 12" {...noteStroke} />
        <ellipse cx="13" cy="14" rx="3" ry="2.2" {...noteStroke} />
      </>
    ),
  };
  return (
    <Glyph width="22" height="24" viewBox="0 0 22 24">
      {shapes[kind]}
    </Glyph>
  );
};

const BarlineSample = styled.svg`
  display: block;
  margin-left: 4px;
`;

const MENUS = [
  ["视图", "V"],
  ["添加", "A"],
  ["格式", "O"],
  ["工具", "T"],
  ["插件", "P"],
  ["帮助", "H"],
];
const NOTE_TOOLS = [
  ["sixteenth", 30],
  ["eighth", 31],
  ["quarter", 27],
  ["half", 32],
  ["whole", 31],
  ["dot", 31],
  ["tie", 32],
  "rule",
  ["rests", 31],
  "rule",
  ["sharp", 30],
  ["natural", 32],
  ["flat", 28],
  ["flip", 32],
  "rule",
];
const SECTIONS = [69.6, 69.4, 69.5, 69.5, 93.6, 69.4, 69.4, 117.9, 93.7, 69.5, 94.5, 60];

export default function App() {
  return (
    <Shell>
      <GlobalStyle />
      <MenuBar>
        {MENUS.map(([name, key]) => (
          <MenuItem key={key}>
            {name}
            <u>({key})</u>
          </MenuItem>
        ))}
      </MenuBar>
      <ToolBar>
        <IconBtn $w={31}><MdSave /></IconBtn>
        <IconBtn $w={31}><MdOutlineCloudUpload /></IconBtn>
        <IconBtn $w={31}><MdPrint /></IconBtn>
        <IconBtn $w={30}><MdUndo /></IconBtn>
        <IconBtn $w={31} $color="#a9a9ab"><MdRedo /></IconBtn>
        <ComboBox $w={64} $ml={4} $edit>
          <ComboText>159%</ComboText>
          <ComboArrow $w={20} $edit />
        </ComboBox>
        <ComboBox $w={81} $ml={1}>
          <ComboText>多页视图</ComboText>
          <ComboArrow $w={22} />
        </ComboBox>
        <Handle $ml={3} />
        <IconBtn $w={31} $ml={2} $on><MidiIcon /></IconBtn>
        <IconBtn $w={30} $ml={5}><StartIcon /></IconBtn>
        <IconBtn $w={30} $on><PlayIcon /></IconBtn>
        <IconBtn $w={30} $ml={1}><MdSync className="turned" /></IconBtn>
        <IconBtn $w={30} $ml={4} $on><RepeatIcon /></IconBtn>
        <IconBtn $w={30}><EndIcon /></IconBtn>
        <IconBtn $w={30} $ml={2}><MetronomeIcon /></IconBtn>
        <Handle $ml={3} />
        <ConcertPitch $ml={9}>标准音高</ConcertPitch>
        <Handle $ml={10} />
        <IconBtn $w={30} $ml={3}><CameraIcon /></IconBtn>
      </ToolBar>
      <NoteBar>
        {NOTE_TOOLS.map((tool, i) =>
          tool === "rule" ? (
            <ThinRule key={i} />
          ) : (
            <NoteBtn key={tool[0]} $w={tool[1]}>
              <NoteGlyph kind={tool[0]} />
            </NoteBtn>
          )
        )}
        {[1, 2, 3, 4].map((n) => (
          <NoteBtn key={n} $w={20}>{n}</NoteBtn>
        ))}
        <Handle $ml={3} />
        <PresetBtn>基础</PresetBtn>
      </NoteBar>
      <Main>
        <LeftDock>
          <DockHead>
            <MdOutlineOpenInNew />
            <MdClose />
          </DockHead>
          <SearchRow>
            <SearchInput />
            <SquareBtn $ml={7}><MdSearch /></SquareBtn>
            <SquareBtn $ml={5}><EllipsisDots><i /><i /><i /></EllipsisDots></SquareBtn>
          </SearchRow>
          <PaletteList>
            {SECTIONS.map((h, i) => (
              <PaletteSection key={i} $h={h}>
                <Dots><i /><i /><i /></Dots>
                <PaletteBox>
                  {i === 0 && (
                    <BarlineSample width="32" height="24" viewBox="0 0 32 24">
                      {[1, 6, 12, 17, 23].map((y) => (
                        <rect key={y} y={y} width="32" height="1" fill="#bdbdbf" />
                      ))}
                      <rect x="13" width="1" height="24" fill="#8c8c8e" />
                      <rect x="16" width="3" height="24" fill="#8c8c8e" />
                    </BarlineSample>
                  )}
                  {i === SECTIONS.length - 1 ? <PaletteLabel>五线</PaletteLabel> : <MoreLabel>更多</MoreLabel>}
                </PaletteBox>
              </PaletteSection>
            ))}
          </PaletteList>
        </LeftDock>
        <Center>
          <TabBar>
            <Tab>
              德_意_志_的_怒_火*
              <TabClose><MdClose /></TabClose>
            </Tab>
          </TabBar>
          <Canvas>
            <Page>
              <TitleFrame>
                <Title>希特勒的愤怒</Title>
              </TitleFrame>
              <ScoreSvg width="1031" height="760" viewBox="254 320 1031 760">
                {SCORE}
              </ScoreSvg>
            </Page>
          </Canvas>
        </Center>
        <RightDock>
          <InspectorTitle>元素检视器</InspectorTitle>
          <InspectorEmpty>未选择元素</InspectorEmpty>
        </RightDock>
      </Main>
      <StatusBar />
    </Shell>
  );
}
